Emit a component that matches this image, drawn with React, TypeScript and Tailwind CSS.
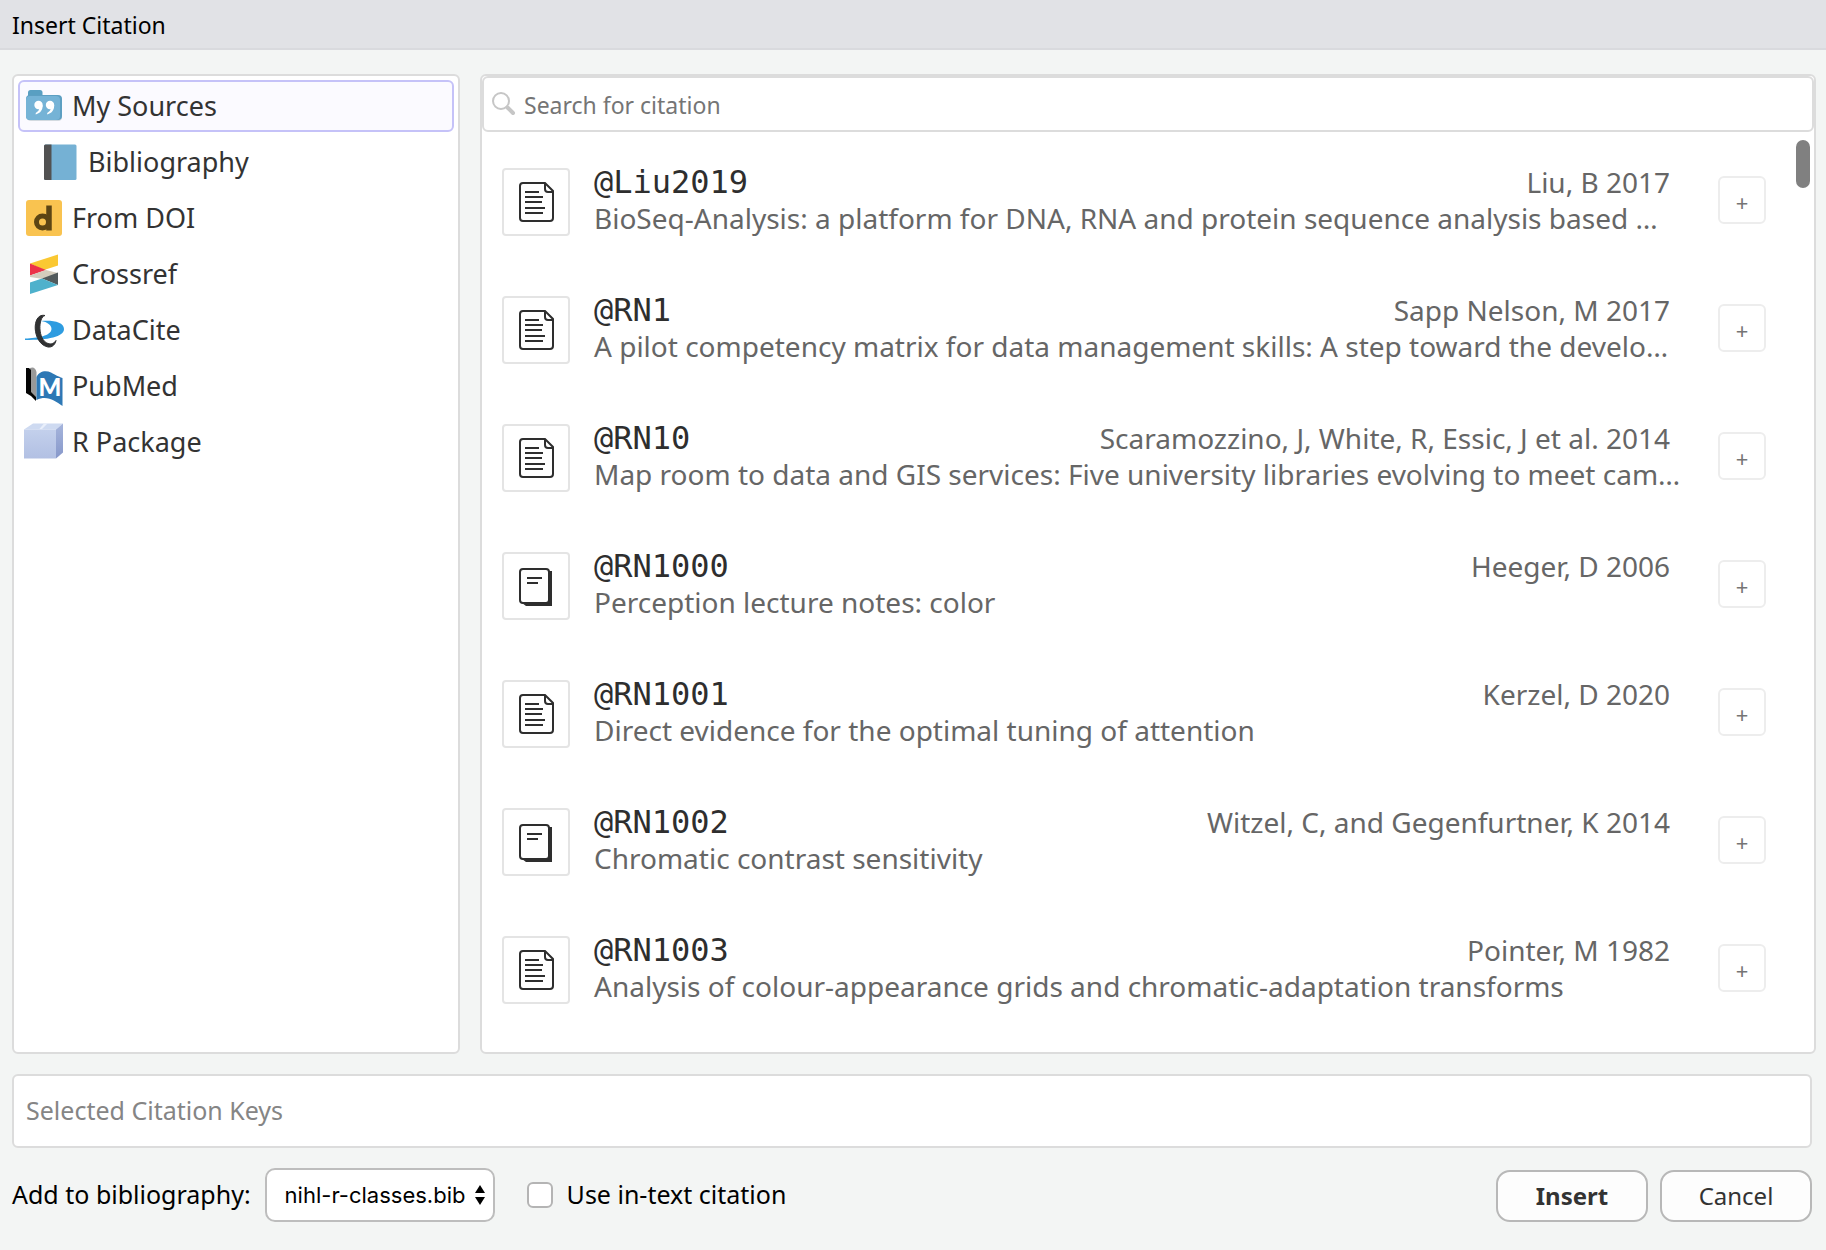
import React from "react";

type Source = { name: string; icon: React.ReactNode; nested?: boolean; selected?: boolean };
type Citation = { key: string; author: string; title: string; kind: "article" | "book" };

const FolderIcon = () => (
  <svg viewBox="0 0 40 40" className="size-10" aria-hidden="true">
    <path d="M4 10V6.500A2.500 2.500 0 0 1 6.500 4h9.500a2.500 2.500 0 0 1 2.500 2.500V10z" fill="#599fc2" />
    <rect x="3" y="10" width="35" height="25" rx="4" fill="#d3dae0" />
    <rect x="2" y="9" width="36" height="25" rx="4" fill="#5d9fc2" />
    <rect x="2" y="10" width="34" height="24" rx="4" fill="#75b3d6" />
    <g fill="#fff">
      <circle cx="14.500" cy="19" r="4.200" />
      <path d="M18.700 19c0 5-2 8-7 9.500V27c2.500-1.500 3.500-3 3.500-5z" />
      <circle cx="26" cy="19" r="4.200" />
      <path d="M30.200 19c0 5-2 8-7 9.500V27c2.500-1.500 3.500-3 3.500-5z" />
    </g>
  </svg>
);

const BookIcon = () => (
  <svg viewBox="0 0 40 40" className="size-10" aria-hidden="true">
    <rect x="4" y="2.500" width="32.500" height="35.500" rx="1.500" fill="#75b1d4" />
    <path d="M11.500 2.500h-6A1.500 1.500 0 0 0 4 4v32.500A1.500 1.500 0 0 0 5.500 38h6z" fill="#525252" />
  </svg>
);

const DoiIcon = () => (
  <svg viewBox="0 0 40 40" className="size-10" aria-hidden="true">
    <rect x="2" y="2" width="36" height="36" rx="3" fill="#f9c350" />
    <circle cx="18.500" cy="24" r="6" fill="none" stroke="#5c4514" strokeWidth="5" />
    <path d="M25 7.500v25" stroke="#5c4514" strokeWidth="5.500" />
  </svg>
);

const CrossrefIcon = () => (
  <svg viewBox="0 0 40 40" className="size-10" aria-hidden="true">
    <path d="M6 9.500 34 .5v11L20 16z" fill="#fac832" />
    <path d="M6 9.500 22 16 6 21.500z" fill="#ec3349" />
    <path d="M6 21.500 22 16l12 3-15 6-13-2z" fill="#d3ccbd" />
    <path d="M34 18.500v12.500L18 24.500z" fill="#525a5c" />
    <path d="M6 28.500l12-4L34 31 6 40z" fill="#4eb1cc" />
  </svg>
);

const DataCiteIcon = () => (
  <svg viewBox="0 0 40 40" className="size-10" aria-hidden="true">
    <path d="M17 11c12-1 23 1 23 8 0 8-16 11-39 11v-1.500C14 28 27 26 27.500 19c0-4-4-7-10.500-8z" fill="#2e9ce0" />
    <path
      d="M21 5.500C7 2.500 8 34 24 37c4 .5 7-2 8-6.500-2 3-5 4-8 3C13.500 30 14 7 21 5.500z"
      fill="#303132"
      stroke="#303132"
    />
  </svg>
);

const PubMedIcon = () => (
  <svg viewBox="0 0 40 40" className="size-10" aria-hidden="true">
    <path d="M6 2q5-2 6.500 4v28L6 27z" fill="#999" />
    <path d="M2 2h3l2 2v22l5 5v4l-5-5-5-3z" fill="#050505" />
    <path d="M12.500 11C15 5 22 4 27 6.500c5 2.500 7 4 11.500 5.500v28c-8-5-15-11-26-6z" fill="#2d78b5" />
    <text x="26" y="30" textAnchor="middle" fontFamily="Lato, sans-serif" fontWeight="900" fontSize="24" fill="#fff">
      M
    </text>
  </svg>
);

const PackageIcon = () => (
  <svg viewBox="0 0 40 40" className="size-10" aria-hidden="true">
    <defs>
      <linearGradient id="boxFront" x1="0" y1="0" x2="0" y2="1">
        <stop offset="0" stopColor="#c3d0ec" />
        <stop offset="1" stopColor="#b2c0e3" />
      </linearGradient>
      <linearGradient id="boxSide" x1="0" y1="0" x2="0" y2="1">
        <stop offset="0" stopColor="#a6b5dc" />
        <stop offset="1" stopColor="#8798ca" />
      </linearGradient>
    </defs>
    <path d="M0 7.500l9-6h30l-7 6z" fill="#cedaf1" />
    <path d="M15 7.500l5-6h3.500l-6 6z" fill="#e9effb" />
    <path d="M0 7.500h32v29H0z" fill="url(#boxFront)" />
    <path d="M32 7.500l7-6v29l-7 6z" fill="url(#boxSide)" />
  </svg>
);

const ArticleIcon = () => (
  <svg viewBox="0 0 36 40" className="h-10 w-9" fill="none" stroke="#2e2e2e" strokeWidth="2" aria-hidden="true">
    <path d="M27 1H5a3 3 0 0 0-3 3v32a3 3 0 0 0 3 3h27a3 3 0 0 0 3-3V9z" />
    <path d="M27 1v6a3 3 0 0 0 3 3h5" />
    <path d="M7 10h14M7 15h18M7 20h17M7 26h20M7 31h18" />
  </svg>
);

const ReportIcon = () => (
  <svg viewBox="0 0 36 40" className="h-10 w-9" fill="none" stroke="#2e2e2e" strokeWidth="2" aria-hidden="true">
    <path d="M31 5h3v35H8l-4-3h27z" fill="#2e2e2e" stroke="none" />
    <rect x="2" y="3" width="29" height="34" rx="3" fill="#fff" />
    <path d="M9 12h15M9 17h11" />
  </svg>
);

const SearchIcon = () => (
  <svg viewBox="0 0 24 24" className="size-6 shrink-0" fill="none" stroke="#c6c6c6" aria-hidden="true">
    <circle cx="9" cy="9" r="8" strokeWidth="2" />
    <path d="M15.500 15.500l5.500 5.500" strokeWidth="4" strokeLinecap="round" />
  </svg>
);

const sources: Source[] = [
  { name: "My Sources", icon: <FolderIcon />, selected: true },
  { name: "Bibliography", icon: <BookIcon />, nested: true },
  { name: "From DOI", icon: <DoiIcon /> },
  { name: "Crossref", icon: <CrossrefIcon /> },
  { name: "DataCite", icon: <DataCiteIcon /> },
  { name: "PubMed", icon: <PubMedIcon /> },
  { name: "R Package", icon: <PackageIcon /> },
];

const citations: Citation[] = [
  { key: "@Liu2019", author: "Liu, B 2017", title: "BioSeq-Analysis: a platform for DNA, RNA and protein sequence analysis based …", kind: "article" },
  { key: "@RN1", author: "Sapp Nelson, M 2017", title: "A pilot competency matrix for data management skills: A step toward the develo…", kind: "article" },
  { key: "@RN10", author: "Scaramozzino, J, White, R, Essic, J et al. 2014", title: "Map room to data and GIS services: Five university libraries evolving to meet cam…", kind: "article" },
  { key: "@RN1000", author: "Heeger, D 2006", title: "Perception lecture notes: color", kind: "book" },
  { key: "@RN1001", author: "Kerzel, D 2020", title: "Direct evidence for the optimal tuning of attention", kind: "article" },
  { key: "@RN1002", author: "Witzel, C, and Gegenfurtner, K 2014", title: "Chromatic contrast sensitivity", kind: "book" },
  { key: "@RN1003", author: "Pointer, M 1982", title: "Analysis of colour-appearance grids and chromatic-adaptation transforms", kind: "article" },
];

function SourceList() {
  return (
    <nav aria-label="Sources" className="flex w-[448px] shrink-0 flex-col gap-1 rounded-md border-2 border-[#dcdcdc] bg-white p-1">
      {sources.map((s) => (
        <button
          key={s.name}
          type="button"
          className={
            "flex h-13 items-center gap-2 rounded-md border-2 text-left text-[27px] text-[#333] " +
            (s.selected ? "border-[#c5c2f8] bg-[#fbfaff] " : "border-transparent ") +
            (s.nested ? "pl-5" : "pl-1")
          }
        >
          {s.icon}
          <span>{s.name}</span>
        </button>
      ))}
    </nav>
  );
}

function CitationRow({ item }: { item: Citation }) {
  return (
    <li className="flex h-32 items-center">
      <div className="flex size-17 shrink-0 items-center justify-center rounded-sm border-2 border-[#e4e4e4]">
        {item.kind === "article" ? <ArticleIcon /> : <ReportIcon />}
      </div>
      <div className="ml-6 min-w-0 flex-1 pb-1 text-[28px] leading-9 text-[#666]">
        <div className="flex items-baseline justify-between">
          <span className="font-['DejaVu_Sans_Mono',monospace] text-[32px] leading-9 text-[#2e2e2e]">{item.key}</span>
          <span>{item.author}</span>
        </div>
        <div className="whitespace-nowrap">{item.title}</div>
      </div>
      <button
        type="button"
        aria-label={"Add " + item.key}
        className="mb-1 ml-12 flex size-12 shrink-0 items-center justify-center rounded-md border-2 border-[#ededed] bg-white pt-1 text-[22px] leading-none text-[#757575]"
      >
        +
      </button>
    </li>
  );
}

export default function App() {
  return (
    <div className="flex min-h-screen flex-col bg-[#f3f5f4] font-['Noto_Sans',sans-serif] text-black">
      <header className="flex h-[50px] items-center border-b-2 border-[#d9dade] bg-[#e1e2e6] px-3">
        <h1 className="pt-[2px] text-[23px]">Insert Citation</h1>
      </header>

      <main className="flex flex-1 gap-5 pt-6 pr-[10px] pl-3">
        <SourceList />
        <section aria-label="Citations" className="flex min-w-0 flex-1 flex-col rounded-md border-2 border-[#dcdcdc] bg-white">
          <label className="flex h-14 items-center gap-2 rounded-md border-2 border-[#dcdcdc] px-2">
            <SearchIcon />
            <input
              type="text"
              aria-label="Search for citation"
              placeholder="Search for citation"
              className="min-w-0 flex-1 bg-transparent pt-[2px] text-[23px] outline-none placeholder:text-[#757575]"
            />
          </label>
          <div className="flex flex-1">
            <ul className="min-w-0 flex-1 pt-[6px] pr-[30px] pl-5">
              {citations.map((c) => (
                <CitationRow key={c.key} item={c} />
              ))}
            </ul>
            <div className="w-[18px] pt-2">
              <div className="h-12 w-[14px] rounded-full bg-[#808080]" />
            </div>
          </div>
        </section>
      </main>

      <div className="mt-5 flex pr-[14px] pl-3">
        <input
          type="text"
          aria-label="Selected Citation Keys"
          placeholder="Selected Citation Keys"
          className="h-[74px] w-full rounded-md border-2 border-[#dcdcdc] bg-white px-3 pb-[2px] text-[25px] outline-none placeholder:text-[#858585]"
        />
      </div>

      <footer className="flex items-center pt-5 pr-[14px] pb-7 pl-3 text-[25px]">
        <label htmlFor="bib">Add to bibliography:</label>
        <div className="relative ml-[14px]">
          <select
            id="bib"
            className="h-[54px] w-[230px] appearance-none rounded-[10px] border-2 border-[#bdbdbd] bg-white pl-[18px] font-[Inter,sans-serif] text-[22px] text-black"
          >
            <option>nihl-r-classes.bib</option>
          </select>
          <svg viewBox="0 0 10 20" className="pointer-events-none absolute top-[17px] right-[10px] h-5 w-[10px]" aria-hidden="true">
            <path d="M5 0l5 8H0zM5 20l5-8H0z" />
          </svg>
        </div>
        <label className="ml-8 flex items-center gap-[14px]">
          <input type="checkbox" className="size-[26px] appearance-none rounded-md border-2 border-[#b4b4b4] bg-white" />
          <span>Use in-text citation</span>
        </label>
        <div className="ml-auto flex gap-3 self-end text-[24px] text-[#333]">
          <button type="button" className="h-[52px] w-[152px] rounded-[14px] border-2 border-[#b8b8b8] bg-[#fdfdfd] font-bold">
            Insert
          </button>
          <button type="button" className="h-[52px] w-[152px] rounded-[14px] border-2 border-[#b8b8b8] bg-[#fdfdfd]">
            Cancel
          </button>
        </div>
      </footer>
    </div>
  );
}
